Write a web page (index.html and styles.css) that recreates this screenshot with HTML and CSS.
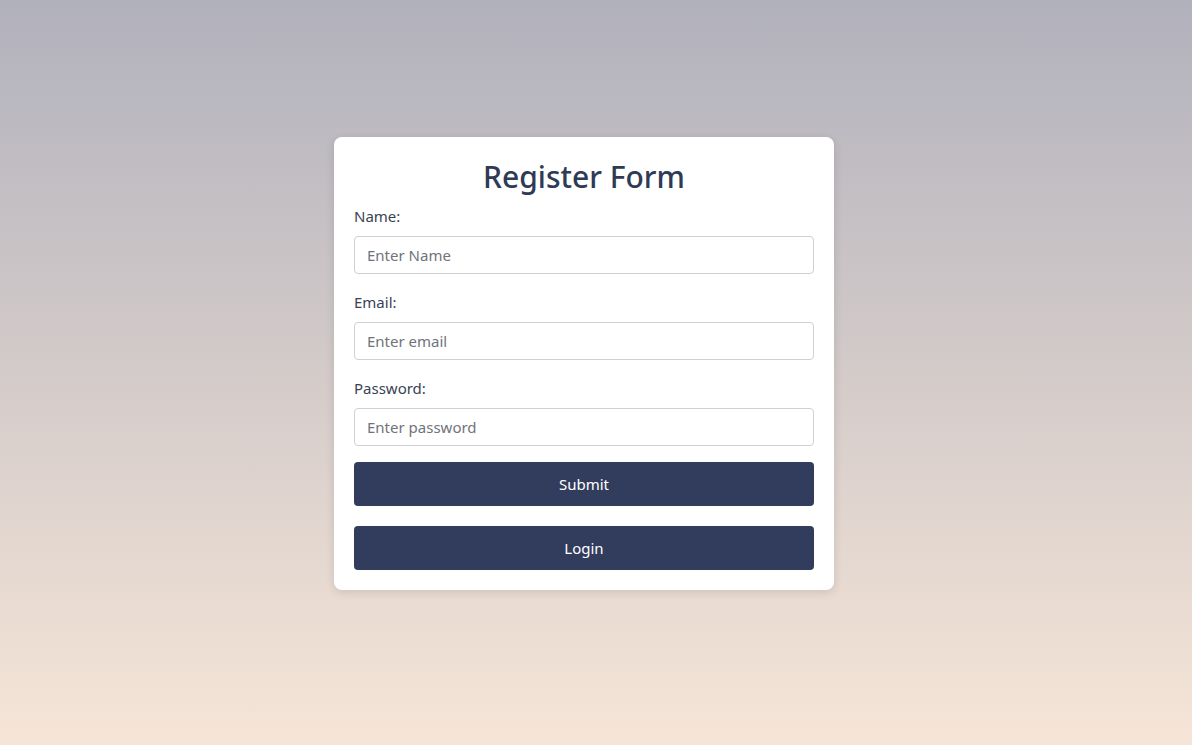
FILE: index.html
```html
<!DOCTYPE html>
<html lang="en">
<head>
<meta charset="utf-8">
<title>Register Form</title>
<link rel="stylesheet" href="styles.css">
</head>
<body>
<main class="page">
  <form class="card">
    <h2 class="title">Register Form</h2>
    <div class="field">
      <label class="label" for="name">Name:</label>
      <input class="input" id="name" type="text" placeholder="Enter Name">
    </div>
    <div class="field">
      <label class="label" for="email">Email:</label>
      <input class="input" id="email" type="email" placeholder="Enter email">
    </div>
    <div class="field">
      <label class="label" for="password">Password:</label>
      <input class="input" id="password" type="password" placeholder="Enter password">
    </div>
    <button class="btn btn-submit" type="button">Submit</button>
    <button class="btn" type="button">Login</button>
  </form>
</main>
</body>
</html>
```
FILE: styles.css
```css
* { box-sizing: border-box; }
html, body { margin: 0; height: 100%; }
body {
  font-family: "Noto Sans", "Open Sans", "Liberation Sans", sans-serif;
  background: linear-gradient(to bottom, #b1b1bc 0%, #f6e5d7 100%);
  color: #2e3a56;
}
.page {
  height: 745px;
  display: flex;
  justify-content: center;
  padding-top: 137px;
  padding-right: 24px;
}
.card {
  width: 500px;
  height: 453px;
  background: #fff;
  border-radius: 8px;
  padding: 20px;
  box-shadow: 0 2px 10px rgba(0,0,0,0.12);
  display: flex;
  flex-direction: column;
}
.title {
  margin: -2px 0 2px;
  font-size: 30px;
  line-height: 43px;
  font-weight: 500;
  text-align: center;
  color: #2e3a56;
}
.field {
  display: flex;
  flex-direction: column;
  margin-top: 6px;
}
.field + .field { margin-top: 18px; }
.label {
  font-size: 15px;
  line-height: 20px;
  color: #3a4256;
  margin-bottom: 10px;
}
.input {
  height: 38px;
  border: 1px solid #cfd0d4;
  border-radius: 4px;
  padding: 0 12px;
  font-family: inherit;
  font-size: 15px;
  color: #333;
  outline: none;
}
.input::placeholder { color: #6f747b; }
.btn {
  height: 44px;
  border: none;
  border-radius: 4px;
  background: #323d5e;
  color: #fff;
  font-family: inherit;
  font-size: 15px;
  margin-top: 20px;
}
.btn-submit { margin-top: 16px; }
```
